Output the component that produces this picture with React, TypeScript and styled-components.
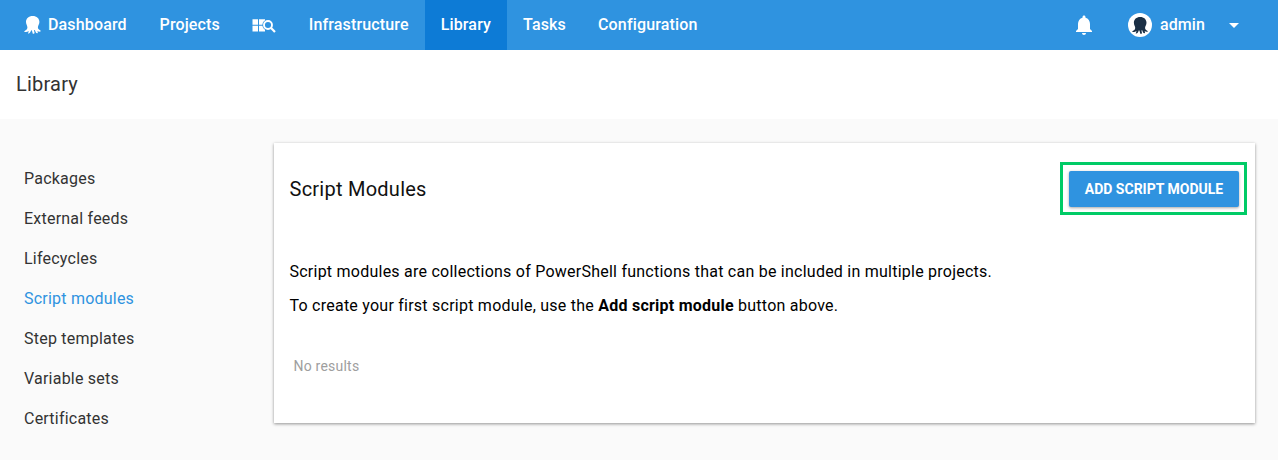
import React from "react";
import styled, { createGlobalStyle } from "styled-components";

const GlobalStyle = createGlobalStyle`
  * { box-sizing: border-box; }
  body { margin: 0; background: #fafafa; font-family: Roboto, sans-serif; color: #000; }
`;
const Page = styled.div`min-height: 460px; background: #fafafa;`;
const NavBar = styled.header`
  height: 50px; display: flex; justify-content: space-between; background: #2f93e0; color: #fff;
`;
const NavGroup = styled.nav`display: flex; padding-left: 8px;`;
const NavItem = styled.a<{ $active?: boolean; $icon?: boolean }>`
  display: flex; align-items: center; gap: 7px; padding: 0 ${p => (p.$icon ? 16.75 : 16)}px 1px 16px;
  font-size: 16px; font-weight: 500; letter-spacing: 0.15px;
  background: ${p => (p.$active ? "#0d7bd6" : "transparent")};
`;
const UserArea = styled.div`display: flex; align-items: center; padding: 0 39px 1px 0;`;
const Bell = styled.svg`margin-right: 32px;`;
const Caret = styled.svg`margin-top: 1px;`;
const Avatar = styled.span`
  width: 24px; height: 24px; border-radius: 50%; background: #fff; color: #1a2f45;
  display: flex; align-items: center; justify-content: center; margin: 1px 8px 0 0;
`;
const UserName = styled.span`font-size: 16px; font-weight: 500; letter-spacing: 0.1px; margin-right: 24px;`;
const TitleBar = styled.div`
  height: 69px; padding: 0 16px 2px; background: #fff; display: flex; align-items: center;
  font-size: 20px; letter-spacing: 0.2px; color: #333;
`;
const Body = styled.div`display: flex; padding: 24px 23px 0 24px;`;
const SideMenu = styled.aside`width: 250px; padding-top: 16px; display: flex; flex-direction: column;`;
const SideLink = styled.a<{ $active?: boolean }>`
  height: 40px; line-height: 40px; font-size: 16px; letter-spacing: 0.22px;
  color: ${p => (p.$active ? "#2f93e0" : "#333")};
`;
const Card = styled.main`
  flex: 1; height: 280px; background: #fff;
  box-shadow: 0 1px 3px rgba(0,0,0,.42);
`;
const CardHeader = styled.div`
  height: 91px; padding: 0 8px 0 15.5px; display: flex; align-items: center; justify-content: space-between;
`;
const CardTitle = styled.h2`margin: 0; font-size: 20px; line-height: 24px; font-weight: 400; letter-spacing: 0.25px; color: #111;`;
const Highlight = styled.div`border: 3px solid #00cb66; padding: 6px 5px 5px 6px;`;
const Button = styled.button`
  width: 170px; height: 36px; border: 0; border-radius: 2px; padding: 0; display: block; white-space: nowrap;
  background: #2f93e0; color: #fff; font: 700 14px Roboto, sans-serif;
  box-shadow: 0 1px 3px rgba(0,0,0,.35);
`;
const Copy = styled.div`padding: 21px 15.5px 0;`;
const Text = styled.p`margin: 0; line-height: 34px; font-size: 16px; letter-spacing: 0.24px;`;
const Empty = styled.div`margin: 33px 19.5px 0; font-size: 14px; line-height: 20px; color: #9e9e9e; letter-spacing: .22px;`;

const Octopus = ({ width = 17 }: { width?: number }) => (
  <svg width={width} height={width + 1} viewBox="0 0 17 18" fill="currentColor">
    <path d="M8.700.1C4.700.1 2 2.700 2 6.100c0 2.200 1.300 3.500 1.400 5.300.1 1.900-1.500 2.900-3.400 4 1.500.9 3.100.8 4.700-.5 0 .9-.4 1.700-.8 2.500 1.600.4 2.700-1 3.200-3.100l.8.100.9 3.300c1.300.4 2-.2 1.700-1.300l-.5-2.200.9-.2c.4 1.400.9 3.400 2.500 3.200.8-.2.3-1.300 0-2.300 1.300.9 2.600 1 3.600.1-2-1.200-3.200-2-3.100-3.600.1-1.800 1.500-3.100 1.500-5.300C15.400 2.700 12.700.1 8.700.1z" />
  </svg>
);
const TenantIcon = () => (
  <svg width="24" height="18" viewBox="0 0 24 18" fill="none">
    <path fill="#fff" d="M.5 3.200h5.500v5.600H.5zM7 3.200h6v5.600H7zM.5 9.800h5.500v5.600H.5zM7 9.800h6v5.600H7z" />
    <circle cx="16" cy="9" r="5.600" fill="#2f93e0" />
    <circle cx="16" cy="9" r="4" stroke="#fff" strokeWidth="1.900" />
    <path d="M18.800 11.800l4.200 4.200" stroke="#fff" strokeWidth="2.200" />
  </svg>
);

const links = ["Packages", "External feeds", "Lifecycles", "Script modules", "Step templates", "Variable sets", "Certificates"];

export default function App() {
  return (
    <Page>
      <GlobalStyle />
      <NavBar>
        <NavGroup>
          <NavItem $icon><Octopus />Dashboard</NavItem>
          <NavItem>Projects</NavItem>
          <NavItem $icon><TenantIcon /></NavItem>
          <NavItem>Infrastructure</NavItem>
          <NavItem $active>Library</NavItem>
          <NavItem>Tasks</NavItem>
          <NavItem>Configuration</NavItem>
        </NavGroup>
        <UserArea>
          <Bell width="24" height="24" viewBox="0 0 24 24" fill="#fff"><path d="M12 22c1.100 0 2-.9 2-2h-4c0 1.100.9 2 2 2zm6-6v-5c0-3.070-1.640-5.640-4.500-6.320V4c0-.83-.67-1.500-1.500-1.500s-1.500.67-1.500 1.500v.68C7.630 5.360 6 7.920 6 11v5l-2 2v1h16v-1l-2-2z" /></Bell>
          <Avatar><Octopus width={16} /></Avatar>
          <UserName>admin</UserName>
          <Caret width="10" height="5" viewBox="0 0 10 5" fill="#fff"><path d="M0 0h10L5 5z" /></Caret>
        </UserArea>
      </NavBar>
      <TitleBar>Library</TitleBar>
      <Body>
        <SideMenu>
          {links.map(t => (
            <SideLink key={t} $active={t === "Script modules"}>{t}</SideLink>
          ))}
        </SideMenu>
        <Card>
          <CardHeader>
            <CardTitle>Script Modules</CardTitle>
            <Highlight><Button>ADD SCRIPT MODULE</Button></Highlight>
          </CardHeader>
          <Copy>
            <Text>Script modules are collections of PowerShell functions that can be included in multiple projects.</Text>
            <Text>To create your first script module, use the <b>Add script module</b> button above.</Text>
          </Copy>
          <Empty>No results</Empty>
        </Card>
      </Body>
    </Page>
  );
}
